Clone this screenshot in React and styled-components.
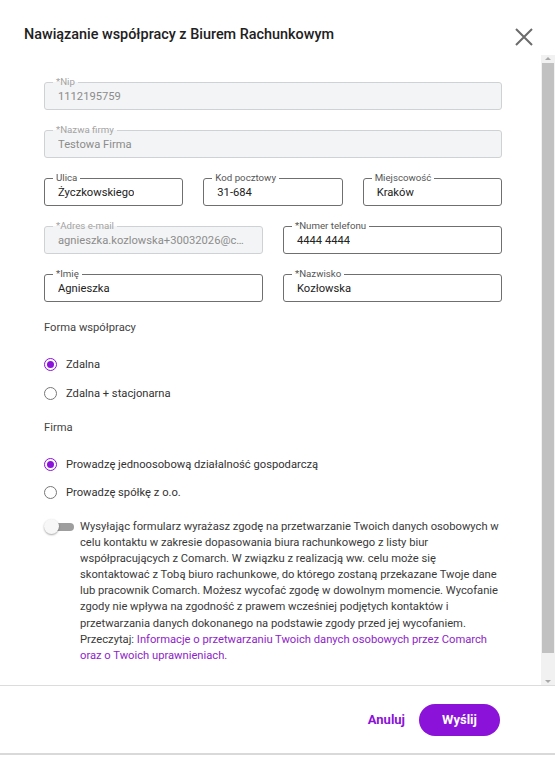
import React from "react";
import styled, { createGlobalStyle } from "styled-components";

const Global = createGlobalStyle`
  html, body {
    margin: 0;
    padding: 0;
    background: #ffffff;
    font-family: Roboto, "Liberation Sans", Arial, sans-serif;
  }
  * { box-sizing: border-box; }
`;

const purple = "#8a12d9";

const Dialog = styled.div`
  width: 555px;
  height: 755px;
  display: flex;
  flex-direction: column;
  background: #fff;
  border-bottom: 2px solid #d9d9d9;
`;

const Header = styled.div`
  height: 55px;
  flex-shrink: 0;
  display: flex;
  align-items: flex-start;
  justify-content: space-between;
  padding: 25px 20px 0 24px;
`;

const Title = styled.h1`
  margin: 0;
  font-size: 14.4px;
  line-height: 20px;
  font-weight: 500;
  color: #212121;
`;

const CloseButton = styled.button`
  border: none;
  background: none;
  padding: 0;
  width: 22px;
  height: 22px;
  margin-top: 1px;
  cursor: pointer;
  display: flex;
  align-items: center;
  justify-content: center;
`;

const BodyRow = styled.div`
  flex: 1;
  min-height: 0;
  display: flex;
`;

const Content = styled.div`
  flex: 1;
  overflow: hidden;
  padding: 27px 39px 0 44px;
`;

const Scrollbar = styled.div`
  position: relative;
  width: 14px;
  flex-shrink: 0;
  background: #f1f1f1;
  padding: 8px 1px 0 1px;

  &::before,
  &::after {
    content: "";
    position: absolute;
    left: 4px;
    border-left: 3px solid transparent;
    border-right: 3px solid transparent;
  }
  &::before {
    top: 2px;
    border-bottom: 3px solid #a8a8a8;
  }
  &::after {
    bottom: 2px;
    border-top: 3px solid #a8a8a8;
  }
`;

const Thumb = styled.div`
  height: 590px;
  background: #c1c1c1;
`;

const Grid = styled.div`
  display: grid;
  grid-template-columns: repeat(${(p) => p.cols}, 1fr);
  column-gap: 20px;
  margin-bottom: ${(p) => (p.last ? 0 : 20)}px;
`;

const Field = styled.div`
  position: relative;
  height: 28px;
  border: 1px solid ${(p) => (p.disabled ? "#cfd2d4" : "#6f6f6f")};
  border-radius: 3px;
  background: ${(p) => (p.disabled ? "#f3f4f5" : "#fff")};
  display: flex;
  align-items: center;
  padding: 1px 13px 0 13px;
  min-width: 0;
`;

const FieldLabel = styled.span`
  position: absolute;
  top: -7px;
  left: 8px;
  padding: 0 3px;
  font-size: 9.7px;
  line-height: 12px;
  color: ${(p) => (p.disabled ? "#a3a3a3" : "#555")};
  background: ${(p) =>
    p.disabled ? "linear-gradient(to bottom, #fff 50%, #f3f4f5 50%)" : "#fff"};
`;

const Value = styled.span`
  font-size: 11.2px;
  color: ${(p) => (p.disabled ? "#8c8c8c" : "#222")};
  white-space: nowrap;
  overflow: hidden;
  text-overflow: ellipsis;
`;

const SectionTitle = styled.div`
  margin-top: ${(p) => p.top}px;
  font-size: 11.2px;
  line-height: 16px;
  color: #444;
`;

const RadioList = styled.div`
  margin-top: 18px;
  display: flex;
  flex-direction: column;
  gap: ${(p) => p.gap}px;
`;

const RadioRow = styled.label`
  display: flex;
  align-items: center;
  gap: 9px;
  height: 20px;
  font-size: 11.2px;
  color: #333;
`;

const RadioCircle = styled.span`
  width: 13px;
  height: 13px;
  border-radius: 50%;
  border: 1.3px solid ${(p) => (p.checked ? purple : "#777")};
  display: flex;
  align-items: center;
  justify-content: center;
  flex-shrink: 0;

  &::after {
    content: "";
    width: 7px;
    height: 7px;
    border-radius: 50%;
    background: ${(p) => (p.checked ? purple : "transparent")};
  }
`;

const Consent = styled.div`
  margin-top: 17px;
  display: grid;
  grid-template-columns: 36px 1fr;
`;

const Switch = styled.span`
  position: relative;
  width: 30px;
  height: 16px;

  &::before {
    content: "";
    position: absolute;
    left: 10px;
    top: 4px;
    width: 20px;
    height: 8px;
    border-radius: 4px;
    background: #9e9e9e;
  }
  &::after {
    content: "";
    position: absolute;
    left: 0;
    top: 0;
    width: 15px;
    height: 15px;
    border-radius: 50%;
    background: #f7f7f7;
    box-shadow: 0 1px 2px rgba(0, 0, 0, 0.35);
  }
`;

const ConsentText = styled.p`
  margin: 0;
  font-size: 11.2px;
  line-height: 16.1px;
  color: #3a3a3a;
`;

const Link = styled.a`
  color: #8e24c8;
  text-decoration: none;
`;

const Footer = styled.div`
  height: 68px;
  flex-shrink: 0;
  border-top: 1px solid #dcdcdc;
  display: flex;
  align-items: center;
  justify-content: flex-end;
  padding: 0 55px 0 0;
`;

const TextButton = styled.button`
  border: none;
  background: none;
  padding: 0 14px;
  height: 32px;
  font-family: inherit;
  font-size: 13px;
  font-weight: 700;
  color: ${purple};
`;

const PrimaryButton = styled.button`
  border: none;
  background: ${purple};
  color: #fff;
  height: 32px;
  width: 81px;
  border-radius: 16px;
  font-family: inherit;
  font-size: 13px;
  font-weight: 700;
`;

const TextField = ({ label, value, disabled }) => (
  <Field disabled={disabled}>
    <FieldLabel disabled={disabled}>{label}</FieldLabel>
    <Value disabled={disabled}>{value}</Value>
  </Field>
);

const Radio = ({ checked, children }) => (
  <RadioRow>
    <RadioCircle checked={checked} />
    {children}
  </RadioRow>
);

export default function App() {
  return (
    <>
      <Global />
      <Dialog>
        <Header>
          <Title>Nawiązanie współpracy z Biurem Rachunkowym</Title>
          <CloseButton aria-label="Zamknij">
            <svg width="18" height="18" viewBox="0 0 18 18">
              <path d="M1 1L17 17M17 1L1 17" stroke="#6b6b6b" strokeWidth="2" />
            </svg>
          </CloseButton>
        </Header>
        <BodyRow>
          <Content>
            <Grid cols={1}>
              <TextField label="*Nip" value="1112195759" disabled />
            </Grid>
            <Grid cols={1}>
              <TextField label="*Nazwa firmy" value="Testowa Firma" disabled />
            </Grid>
            <Grid cols={3}>
              <TextField label="Ulica" value="Życzkowskiego" />
              <TextField label="Kod pocztowy" value="31-684" />
              <TextField label="Miejscowość" value="Kraków" />
            </Grid>
            <Grid cols={2}>
              <TextField
                label="*Adres e-mail"
                value="agnieszka.kozlowska+30032026@comarch.pl"
                disabled
              />
              <TextField label="*Numer telefonu" value="4444 4444" />
            </Grid>
            <Grid cols={2} last>
              <TextField label="*Imię" value="Agnieszka" />
              <TextField label="*Nazwisko" value="Kozłowska" />
            </Grid>

            <SectionTitle top={18}>Forma współpracy</SectionTitle>
            <RadioList gap={9}>
              <Radio checked>Zdalna</Radio>
              <Radio>Zdalna + stacjonarna</Radio>
            </RadioList>

            <SectionTitle top={17}>Firma</SectionTitle>
            <RadioList gap={8}>
              <Radio checked>Prowadzę jednoosobową działalność gospodarczą</Radio>
              <Radio>Prowadzę spółkę z o.o.</Radio>
            </RadioList>

            <Consent>
              <Switch />
              <ConsentText>
                Wysyłając formularz wyrażasz zgodę na przetwarzanie Twoich
                danych osobowych w celu kontaktu w zakresie dopasowania biura
                rachunkowego z listy biur współpracujących z Comarch. W związku
                z realizacją ww. celu może się skontaktować z Tobą biuro
                rachunkowe, do którego zostaną przekazane Twoje dane lub
                pracownik Comarch. Możesz wycofać zgodę w dowolnym momencie.
                Wycofanie zgody nie wpływa na zgodność z prawem wcześniej
                podjętych kontaktów i przetwarzania danych dokonanego na
                podstawie zgody przed jej wycofaniem. Przeczytaj:{" "}
                <Link href="#">
                  Informacje o przetwarzaniu Twoich danych osobowych przez
                  Comarch oraz o Twoich uprawnieniach.
                </Link>
              </ConsentText>
            </Consent>
          </Content>
          <Scrollbar>
            <Thumb />
          </Scrollbar>
        </BodyRow>
        <Footer>
          <TextButton>Anuluj</TextButton>
          <PrimaryButton>Wyślij</PrimaryButton>
        </Footer>
      </Dialog>
    </>
  );
}
